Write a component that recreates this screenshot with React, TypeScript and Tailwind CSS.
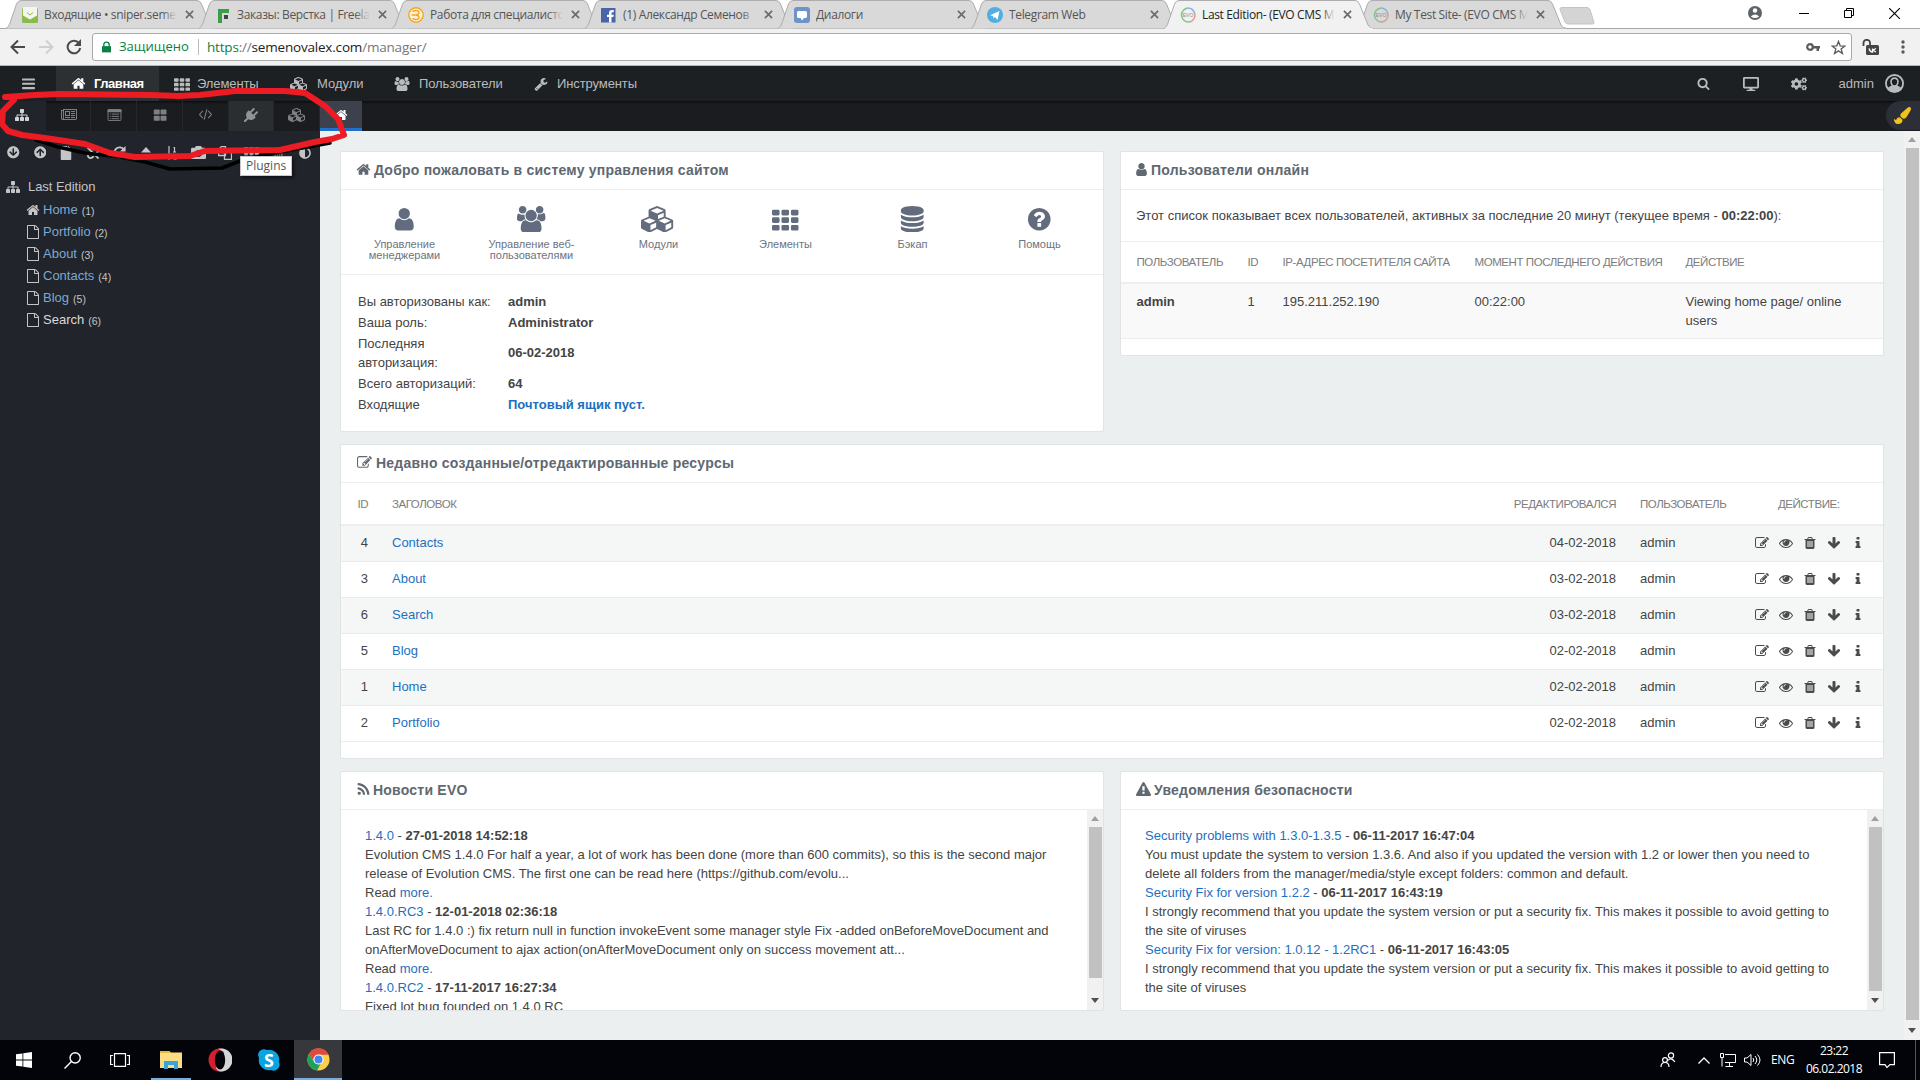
import type { ReactNode } from "react";
import { FaAdjust, FaArrowCircleDown, FaArrowCircleUp, FaCamera, FaCogs, FaDesktop, FaFile, FaPaintBrush, FaUnlink } from "react-icons/fa";

type IconProps = { className?: string };

// Font Awesome 4 outlines: [viewBox width, path]
const GLYPHS = {
    home: [1792, "M1472 992v480q0 26-19 45t-45 19h-384v-384h-256v384h-384q-26 0-45-19t-19-45v-480q0-1 .5-3t.5-3l575-474 575 474q1 2 1 6zm223-69l-62 74q-8 9-21 11h-3q-13 0-21-7l-692-577-692 577q-12 8-24 7-13-2-21-11l-62-74q-8-10-7-23.5t11-21.5l719-599q32-26 76-26t76 26l244 204v-195q0-14 9-23t23-9h192q14 0 23 9t9 23v408l219 182q10 8 11 21.5t-7 23.5z"],
    edit: [1792, "M888 1184l116-116-152-152-116 116v56h96v96h56zm440-720q-16-16-33 1l-350 350q-17 17-1 33t33-1l350-350q17-17 1-33zm80 594v190q0 119-84.5 203.5t-203.5 84.5h-832q-119 0-203.5-84.5t-84.5-203.5v-832q0-119 84.5-203.5t203.5-84.5h832q63 0 117 25 15 7 18 23 3 17-9 29l-49 49q-14 14-32 8-23-6-45-6h-832q-66 0-113 47t-47 113v832q0 66 47 113t113 47h832q66 0 113-47t47-113v-126q0-13 9-22l64-64q15-15 35-7t20 29zm-96-738l288 288-672 672h-288v-288zm444 132l-92 92-288-288 92-92q28-28 68-28t68 28l152 152q28 28 28 68t-28 68z"],
    eye: [1792, "M1664 960q-152-236-381-353 61 104 61 225 0 185-131.5 316.5t-316.5 131.5-316.5-131.5-131.5-316.5q0-121 61-225-229 117-381 353 133 205 333.5 326.5t434.5 121.5 434.5-121.5 333.5-326.5zm-720-384q0-20-14-34t-34-14q-125 0-214.5 89.5t-89.5 214.5q0 20 14 34t34 14 34-14 14-34q0-86 61-147t147-61q20 0 34-14t14-34zm848 384q0 34-20 69-140 230-376.5 368.5t-499.5 138.5-499.5-139-376.5-368q-20-35-20-69t20-69q140-229 376.5-368t499.5-139 499.5 139 376.5 368q20 35 20 69z"],
    trash: [1792, "M704 1376v-704q0-14-9-23t-23-9h-64q-14 0-23 9t-9 23v704q0 14 9 23t23 9h64q14 0 23-9t9-23zm256 0v-704q0-14-9-23t-23-9h-64q-14 0-23 9t-9 23v704q0 14 9 23t23 9h64q14 0 23-9t9-23zm256 0v-704q0-14-9-23t-23-9h-64q-14 0-23 9t-9 23v704q0 14 9 23t23 9h64q14 0 23-9t9-23zm-544-992h448l-48-117q-7-9-17-11h-317q-10 2-17 11zm928 32v64q0 14-9 23t-23 9h-96v948q0 83-47 143.5t-113 60.5h-832q-66 0-113-58.5t-47-141.5v-952h-96q-14 0-23-9t-9-23v-64q0-14 9-23t23-9h309l70-167q15-37 54-63t79-26h320q40 0 79 26t54 63l70 167h309q14 0 23 9t9 23z"],
    down: [1792, "M1675 832q0 53-37 90l-651 652q-39 37-91 37-53 0-90-37l-651-652q-38-36-38-90 0-53 38-91l74-75q39-37 91-37 53 0 90 37l294 294v-704q0-52 38-90t90-38h128q52 0 90 38t38 90v704l294-294q37-37 90-37 52 0 91 37l75 75q37 39 37 91z"],
    info: [1792, "M1216 1344v128q0 26-19 45t-45 19h-512q-26 0-45-19t-19-45v-128q0-26 19-45t45-19h64v-384h-64q-26 0-45-19t-19-45v-128q0-26 19-45t45-19h384q26 0 45 19t19 45v576h64q26 0 45 19t19 45zm-128-1152v192q0 26-19 45t-45 19h-256q-26 0-45-19t-19-45v-192q0-26 19-45t45-19h256q26 0 45 19t19 45z"],
    sitemap: [1792, "M1792 1248v320q0 40-28 68t-68 28h-320q-40 0-68-28t-28-68v-320q0-40 28-68t68-28h96v-192h-512v192h96q40 0 68 28t28 68v320q0 40-28 68t-68 28h-320q-40 0-68-28t-28-68v-320q0-40 28-68t68-28h96v-192h-512v192h96q40 0 68 28t28 68v320q0 40-28 68t-68 28h-320q-40 0-68-28t-28-68v-320q0-40 28-68t68-28h96v-192q0-52 38-90t90-38h512v-192h-96q-40 0-68-28t-28-68v-320q0-40 28-68t68-28h320q40 0 68 28t28 68v320q0 40-28 68t-68 28h-96v192h512q52 0 90 38t38 90v192h96q40 0 68 28t28 68z"],
    cubes: [2304, "M640 1632l384-192v-314l-384 164v342zm-64-454l404-173-404-173-404 173zm1088 454l384-192v-314l-384 164v342zm-64-454l404-173-404-173-404 173zm-448-293l384-165v-266l-384 164v267zm-64-379l441-189-441-189-441 189zm1088 518v416q0 36-19 67t-52 47l-448 224q-25 14-57 14t-57-14l-448-224q-5-2-7-4-2 2-7 4l-448 224q-25 14-57 14t-57-14l-448-224q-33-16-52-47t-19-67v-416q0-38 21.5-70t56.5-48l434-186v-400q0-38 21.5-70t56.5-48l448-192q23-10 50-10t50 10l448 192q35 16 56.5 48t21.5 70v400l434 186q36 16 57 48t21 70z"],
    users: [2048, "M657 896q-162 5-265 128h-134q-82 0-138-40.5t-56-118.5q0-353 124-353 6 0 43.5 21t97.5 42.5 119 21.5q67 0 133-23-5 37-5 66 0 159 90 294zm1071 637q0 120-73 189.5t-194 69.5h-874q-121 0-194-69.5t-73-189.5q0-53 3.5-103.5t14-109 26.5-108.5 43-97.5 62-81 85.5-53.5 111.5-20q10 0 43 21.5t73 48 107 48 135 21.5 135-21.5 107-48 73-48 43-21.5q61 0 111.5 20t85.5 53.5 62 81 43 97.5 26.5 108.5 14 109 3.5 103.5zm-1024-1277q0 106-75 181t-181 75-181-75-75-181 75-181 181-75 181 75 75 181zm704 384q0 159-112.5 271.5t-271.5 112.5-271.5-112.5-112.5-271.5 112.5-271.5 271.5-112.5 271.5 112.5 112.5 271.5zm576 225q0 78-56 118.5t-138 40.5h-134q-103-123-265-128 90-135 90-294 0-29-5-66 66 23 133 23 59 0 119-21.5t97.5-42.5 43.5-21q124 0 124 353zm-128-609q0 106-75 181t-181 75-181-75-75-181 75-181 181-75 181 75 75 181z"],
    user: [1792, "M1536 1399q0 109-62.5 187t-150.5 78h-854q-88 0-150.5-78t-62.5-187q0-85 8.5-160.5t31.5-152 58.5-131 94-89 134.5-34.5q131 128 313 128t313-128q76 0 134.5 34.5t94 89 58.5 131 31.5 152 8.5 160.5zm-256-887q0 159-112.5 271.5t-271.5 112.5-271.5-112.5-112.5-271.5 112.5-271.5 271.5-112.5 271.5 112.5 112.5 271.5z"],
    wrench: [1792, "M448 1472q0-26-19-45t-45-19-45 19-19 45 19 45 45 19 45-19 19-45zm644-420l-682 682q-37 37-90 37-52 0-91-37l-106-108q-38-36-38-90 0-53 38-91l681-681q39 98 114.5 173.5t173.5 114.5zm634-435q0 39-23 106-47 134-164.5 217.5t-258.5 83.5q-185 0-316.5-131.5t-131.5-316.5 131.5-316.5 316.5-131.5q58 0 121.5 16.5t107.5 46.5q16 11 16 28t-16 28l-293 169v224l193 107q5-3 79-48.5t135.5-81 70.5-35.5q15 0 23.5 10t8.5 25z"],
    database: [1792, "M896 768q237 0 443-43t325-127v170q0 69-103 128t-280 93.5-385 34.5-385-34.5-280-93.5-103-128v-170q119 84 325 127t443 43zm0 768q237 0 443-43t325-127v170q0 69-103 128t-280 93.5-385 34.5-385-34.5-280-93.5-103-128v-170q119 84 325 127t443 43zm0-384q237 0 443-43t325-127v170q0 69-103 128t-280 93.5-385 34.5-385-34.5-280-93.5-103-128v-170q119 84 325 127t443 43zm0-1152q208 0 385 34.5t280 93.5 103 128v128q0 69-103 128t-280 93.5-385 34.5-385-34.5-280-93.5-103-128v-128q0-69 103-128t280-93.5 385-34.5z"],
    question: [1792, "M1024 1376v-192q0-14-9-23t-23-9h-192q-14 0-23 9t-9 23v192q0 14 9 23t23 9h192q14 0 23-9t9-23zm256-672q0-88-55.5-163t-138.5-116-170-41q-243 0-371 213-15 24 8 42l132 100q7 6 19 6 16 0 25-12 53-68 86-92 34-24 86-24 48 0 85.5 26t37.5 59q0 38-20 61t-68 45q-63 28-115.5 86.5t-52.5 125.5v36q0 14 9 23t23 9h192q14 0 23-9t9-23q0-19 21.5-49.5t54.5-49.5q32-18 49-28.5t46-35 44.5-48 28-60.5 12.5-81zm384 192q0 209-103 385.5t-279.5 279.5-385.5 103-385.5-103-279.5-279.5-103-385.5 103-385.5 279.5-279.5 385.5-103 385.5 103 279.5 279.5 103 385.5z"],
    file: [1792, "M1596 380q28 28 48 76t20 88v1152q0 40-28 68t-68 28h-1344q-40 0-68-28t-28-68v-1600q0-40 28-68t68-28h896q40 0 88 20t76 48zm-444-244v376h376q-10-29-22-41l-313-313q-12-12-41-22zm384 1528v-1024h-416q-40 0-68-28t-28-68v-416h-768v1536h1280z"],
    warning: [1792, "M1024 1375v-190q0-14-9.5-23.5t-22.5-9.5h-192q-13 0-22.5 9.5t-9.5 23.5v190q0 14 9.5 23.5t22.5 9.5h192q13 0 22.5-9.5t9.5-23.5zm-2-374l18-459q0-12-10-19-13-11-24-11h-220q-11 0-24 11-10 7-10 21l17 457q0 10 10 16.5t24 6.5h185q14 0 23.5-6.5t10.5-16.5zm-14-934l768 1408q35 63-2 126-17 29-46.5 46t-63.5 17h-1536q-34 0-63.5-17t-46.5-46q-37-63-2-126l768-1408q17-31 47-49t65-18 65 18 47 49z"],
    search: [1792, "M1216 832q0-185-131.5-316.5t-316.5-131.5-316.5 131.5-131.5 316.5 131.5 316.5 316.5 131.5 316.5-131.5 131.5-316.5zm512 832q0 52-38 90t-90 38q-54 0-90-38l-343-342q-179 124-399 124-143 0-273.5-55.5t-225-150-150-225-55.5-273.5 55.5-273.5 150-225 225-150 273.5-55.5 273.5 55.5 225 150 150 225 55.5 273.5q0 220-124 399l343 343q37 37 37 90z"],
    rss: [1792, "M576 1344q0 80-56 136t-136 56-136-56-56-136 56-136 136-56 136 56 56 136zm512 123q2 28-17 48-18 21-47 21h-135q-25 0-43-16.5t-20-41.5q-22-229-184.5-391.5t-391.5-184.5q-25-2-41.5-20t-16.5-43v-135q0-29 21-47 17-17 43-17h5q160 13 306 80.5t259 181.5q114 113 181.5 259t80.5 306zm512 2q2 27-18 47-18 20-46 20h-143q-26 0-44.5-17.5t-19.5-42.5q-12-215-101-408.5t-231.5-336-336-231.5-408.5-102q-25-1-42.5-19.5t-17.5-43.5v-143q0-28 20-46 18-18 44-18h3q262 13 501.5 120t425.5 294q187 186 294 425.5t120 501.5z"],
    plug: [1792, "M1755 453q37 38 37 90.5t-37 90.5l-401 400 150 150-160 160q-163 163-389.5 186.5t-411.5-100.5l-362 362h-181v-181l362-362q-124-185-100.5-411.5t186.5-389.5l160-160 150 150 400-401q38-37 91-37t90 37 37 90.5-37 90.5l-400 401 234 234 401-400q38-37 91-37t90 37z"],
    newspaper: [2048, "M1024 512h-384v384h384v-384zm128 640v128h-640v-128h640zm0-768v640h-640v-640h640zm640 768v128h-512v-128h512zm0-256v128h-512v-128h512zm0-256v128h-512v-128h512zm0-256v128h-512v-128h512zm-1536 960v-960h-128v960q0 26 19 45t45 19 45-19 19-45zm1664 0v-1088h-1536v1088q0 33-11 64h1483q26 0 45-19t19-45zm128-1216v1216q0 80-56 136t-136 56h-1664q-80 0-136-56t-56-136v-1088h256v-128h1792z"],
    th: [1792, "M96 256h320q96 0 96 96v192q0 96-96 96h-320q-96 0-96-96v-192q0-96 96-96zm0 512h320q96 0 96 96v192q0 96-96 96h-320q-96 0-96-96v-192q0-96 96-96zm0 512h320q96 0 96 96v192q0 96-96 96h-320q-96 0-96-96v-192q0-96 96-96zM736 256h320q96 0 96 96v192q0 96-96 96h-320q-96 0-96-96v-192q0-96 96-96zm0 512h320q96 0 96 96v192q0 96-96 96h-320q-96 0-96-96v-192q0-96 96-96zm0 512h320q96 0 96 96v192q0 96-96 96h-320q-96 0-96-96v-192q0-96 96-96zM1376 256h320q96 0 96 96v192q0 96-96 96h-320q-96 0-96-96v-192q0-96 96-96zm0 512h320q96 0 96 96v192q0 96-96 96h-320q-96 0-96-96v-192q0-96 96-96zm0 512h320q96 0 96 96v192q0 96-96 96h-320q-96 0-96-96v-192q0-96 96-96z"],
    thLarge: [1792, "M192 192h576q96 0 96 96v448q0 96-96 96h-576q-96 0-96-96v-448q0-96 96-96zm0 800h576q96 0 96 96v448q0 96-96 96h-576q-96 0-96-96v-448q0-96 96-96zM1056 192h576q96 0 96 96v448q0 96-96 96h-576q-96 0-96-96v-448q0-96 96-96zm0 800h576q96 0 96 96v448q0 96-96 96h-576q-96 0-96-96v-448q0-96 96-96z"],
    bars: [1792, "M192 288h1408q64 0 64 64v128q0 64-64 64h-1408q-64 0-64-64v-128q0-64 64-64zm0 512h1408q64 0 64 64v128q0 64-64 64h-1408q-64 0-64-64v-128q0-64 64-64zm0 512h1408q64 0 64 64v128q0 64-64 64h-1408q-64 0-64-64v-128q0-64 64-64z"],
} as const;

type GlyphName = keyof typeof GLYPHS;

function Fa({ name, className }: { name: GlyphName } & IconProps) {
    const [width, d] = GLYPHS[name];
    return (
        <svg viewBox={`0 0 ${width} 1792`} fill="currentColor" className={`shrink-0 ${className ?? ""}`}>
            <path d={d} />
        </svg>
    );
}

const EvoIcon = () => (
    <svg viewBox="0 0 16 16" className="size-4 shrink-0" fill="none" strokeWidth="1.5">
        <path d="M8 1a7 7 0 0 1 6.5 5" stroke="#7fb2e0" />
        <path d="M14.6 6A7 7 0 0 1 9 15" stroke="#e39a86" />
        <path d="M9 15A7 7 0 0 1 8 1" stroke="#86c08c" />
        <text x="8" y="10" fontSize="5" textAnchor="middle" fill="#888" fontFamily="Liberation Sans">EVO</text>
    </svg>
);

const TABS: { title: string; icon: ReactNode; active?: boolean }[] = [
    {
        title: "Входящие • sniper.semer",
        icon: (
            <svg viewBox="0 0 16 16" className="size-4 shrink-0">
                <rect y="1" width="16" height="15" rx="1.5" fill="#8bbb4a" />
                <path d="M1 0h14v8.500l-7 4-7-4z" fill="#f3f6ec" />
                <path d="M5 5.500l3 2.500 3-2.500" stroke="#8bbb4a" fill="none" />
            </svg>
        ),
    },
    {
        title: "Заказы: Верстка | Freelan",
        icon: (
            <svg viewBox="0 0 16 16" className="size-4 shrink-0">
                <path d="M3 2h11v4H7v10H3z" fill="#3d9c46" />
                <path d="M9 8h4v4H9z" fill="#444" />
            </svg>
        ),
    },
    {
        title: "Работа для специалистов",
        icon: (
            <svg viewBox="0 0 16 16" className="size-4 shrink-0" fill="none" stroke="#f5a623" strokeWidth="1.4">
                <circle cx="8" cy="8" r="7.200" fill="#fff3da" />
                <path d="M5 5q0-1.500 3-1.500T11 5.500 8 8M5 11q0 1.500 3 1.500t3-2T8 8M3.500 8H8" />
            </svg>
        ),
    },
    {
        title: "(1) Александр Семенов",
        icon: (
            <svg viewBox="0 0 16 16" className="size-4 shrink-0">
                <rect y="1" width="14.500" height="14.500" fill="#4a64a8" />
                <path d="M8 15.500V10H6V7.700h2V6q0-3 3-3h1.800v2.200h-1.300q-1 0-1 1v1.500h2.300L12.400 10h-1.900v5.500z" fill="#fff" />
            </svg>
        ),
    },
    {
        title: "Диалоги",
        icon: (
            <svg viewBox="0 0 16 16" className="size-4 shrink-0">
                <rect width="16" height="16" rx="3" fill="#6d93c7" />
                <path d="M4.500 4h7q1.500 0 1.500 1.500v4q0 1.500-1.500 1.500H10l-2 2.500L6.500 11h-2Q3 11 3 9.500v-4Q3 4 4.500 4z" fill="#fff" />
            </svg>
        ),
    },
    {
        title: "Telegram Web",
        icon: (
            <svg viewBox="0 0 16 16" className="size-4 shrink-0">
                <circle cx="8" cy="8" r="8" fill="#4fafe3" />
                <path d="M3 8.200L12.500 4l-2 9-2.500-3-1.500 1.500L6.200 9z" fill="#fff" />
            </svg>
        ),
    },
    { title: "Last Edition- (EVO CMS M", icon: <EvoIcon />, active: true },
    { title: "My Test Site- (EVO CMS M", icon: <EvoIcon /> },
];

function BrowserTab({ title, icon, active }: (typeof TABS)[number]) {
    return (
        <div className={`relative h-[29px] w-[193px] shrink-0 ${active ? "z-10" : ""}`}>
            <svg viewBox="0 0 211 29" className="absolute top-0 left-0 h-[29px] w-[211px]">
                <path d="M0 28.500Q2.500 27.500 4 23L10.500 4Q12 .5 15 .5H191Q194 .5 195.500 4L204 25Q205.500 28 210 28.500" fill={active ? "#f1f1f1" : "#d9d9d9"} stroke="#adadad" />
                {active && <path d="M1 28.500h208" stroke="#f1f1f1" strokeWidth="1.500" />}
            </svg>
            <div className="relative flex h-full items-center pl-4">
                {icon}
                <span className={`ml-[6px] w-[133px] overflow-hidden whitespace-nowrap text-[12px] tracking-[-0.35px] ${active ? "text-[#222]" : "text-[#555]"}`}>{title}</span>
                <svg viewBox="0 0 10 10" className="ml-[8px] size-[9px] shrink-0">
                    <path d="M1 1l8 8M9 1L1 9" stroke="#6a6a6a" strokeWidth="1.800" />
                </svg>
            </div>
            <div className={`absolute top-1 left-[156px] h-[22px] w-[15px] bg-linear-to-r from-transparent ${active ? "to-[#f1f1f1]" : "to-[#d9d9d9]"}`} />
        </div>
    );
}

function Browser() {
    return (
        <div className="h-[66px] bg-[#f1f1f1] font-['Open_Sans',sans-serif]">
            <div className="flex h-[29px] border-b border-[#a8a8a8] bg-white pl-[6px]">
                {TABS.map((tab) => (
                    <BrowserTab key={tab.title} {...tab} />
                ))}
                <svg viewBox="0 0 36 18" className="mt-[7px] ml-[9px] h-[18px] w-9">
                    <path d="M3 .5h25q2 0 3 2l4 13q.5 1.500-1.500 1.500H9q-2 0-3-2L1 2.500Q.5.500 3 .5z" fill="#d4d4d4" stroke="#c4c4c4" />
                </svg>
                <div className="mr-[20px] ml-auto flex h-[26px] items-center gap-[35px]">
                    <svg viewBox="0 0 14 14" className="mr-[2px] size-[14px]">
                        <circle cx="7" cy="7" r="7" fill="#5f6368" />
                        <circle cx="7" cy="4.500" r="2.200" fill="#fff" />
                        <path d="M2.800 10.500q4.200-4 8.400 0-4.200 3-8.400 0z" fill="#fff" />
                    </svg>
                    <svg viewBox="0 0 10 10" className="size-[10px] stroke-black"><path d="M0 5.500h10" /></svg>
                    <svg viewBox="0 0 10 10" className="size-[10px] fill-none stroke-black"><path d="M.5 2.500h7v7h-7zM2.500 2.500v-2h7v7h-2" /></svg>
                    <svg viewBox="0 0 10 10" className="size-[11px] stroke-black"><path d="M0 0l10 10M10 0L0 10" /></svg>
                </div>
            </div>
            <div className="flex h-[37px] items-center border-b border-[#b6b6b8] pl-[10px]">
                <svg viewBox="0 0 16 16" className="size-4 fill-none stroke-[#4a4a4a] stroke-2"><path d="M15 8H2M8 1.500L1.500 8 8 14.500" /></svg>
                <svg viewBox="0 0 16 16" className="ml-[12px] size-4 fill-none stroke-[#cfcfcf] stroke-2"><path d="M1 8h13M8 1.500L14.500 8 8 14.500" /></svg>
                <svg viewBox="0 0 16 16" className="ml-[12px] size-4"><path d="M13 4.200A6.300 6.300 0 1 0 14.200 9" fill="none" stroke="#4a4a4a" strokeWidth="2" /><path d="M15 0v7H8z" fill="#4a4a4a" /></svg>
                <div className="ml-[10px] flex h-[28px] w-[1760px] items-center rounded-[3px] border border-[#a9a9a9] bg-white pl-[9px] text-[14px]">
                    <svg viewBox="0 0 10 12" className="h-[12px] w-[9px]"><path d="M0 5h10v7H0z" fill="#0b8043" /><path d="M2 5V3.500a3 3 0 0 1 6 0V5" fill="none" stroke="#0b8043" strokeWidth="1.500" /></svg>
                    <span className="ml-[8px] w-[70px] whitespace-nowrap text-[13px] text-[#0b8043]">Защищено</span>
                    <span className="ml-[9px] h-[16px] w-px bg-[#bbb]" />
                    <span className="ml-[8px] text-[13.500px] tracking-[-0.19px] text-[#777]">
                        <span className="text-[#0b8043]">https</span>://<span className="text-[#222]">semenovalex.com</span>/manager/
                    </span>
                    <svg viewBox="0 0 14 8" className="mr-[11px] ml-auto h-[8px] w-[14px]"><circle cx="4" cy="4" r="2.800" fill="none" stroke="#5a5a5a" strokeWidth="2.200" /><path d="M7 3h7v2.500h-1V8h-2.500V5.500H7z" fill="#5a5a5a" /></svg>
                    <svg viewBox="0 0 16 16" className="mr-[5px] size-[15px]"><path d="M8 1.500l1.800 4.700 5 .2-4 3.100 1.400 4.900L8 11.600l-4.200 2.800 1.400-4.900-4-3.100 5-.2z" fill="none" stroke="#5a5a5a" strokeWidth="1.400" /></svg>
                </div>
                <svg viewBox="0 0 17 16" className="ml-[10px] h-4 w-[17px]">
                    <path d="M1.500 7V4a3 3 0 0 1 6.500 0v2" fill="none" stroke="#444" strokeWidth="1.800" />
                    <rect x="4" y="6" width="13" height="10" rx="1.500" fill="#444" />
                    <path d="M7 9.500q1 3.500 3.500 3.500V9.500M14 9.500L10.800 11.200 14 13" fill="none" stroke="#fff" strokeWidth="1.300" />
                </svg>
                <svg viewBox="0 0 4 14" className="ml-[22px] h-[14px] w-1 fill-[#5a5a5a]"><circle cx="2" cy="2" r="1.700" /><circle cx="2" cy="7" r="1.700" /><circle cx="2" cy="12" r="1.700" /></svg>
            </div>
        </div>
    );
}

function MainMenu() {
    return (
        <header className="flex h-[35px] items-center bg-[#1d2023] text-[13px] text-[#b9bbbd]">
            <div className="flex w-14 justify-center"><Fa name="bars" className="h-[15px]" /></div>
            <div className="flex h-full w-[103px] items-center bg-[#2d3033] pl-[15px] font-bold tracking-[-0.45px] text-white">
                <Fa name="home" className="mr-[8px] h-[15px]" />Главная
            </div>
            <div className="flex w-[117px] items-center pl-[15px] tracking-[-0.1px]"><Fa name="th" className="mr-[7px] h-[16px]" />Элементы</div>
            <div className="flex w-[104px] items-center pl-[14px]"><Fa name="cubes" className="mr-[9px] h-[14px]" />Модули</div>
            <div className="flex w-[139px] items-center pl-[14px] tracking-[-0.1px]"><Fa name="users" className="mr-[9px] h-[14px]" />Пользователи</div>
            <div className="flex items-center pl-[15px] tracking-[-0.1px]"><Fa name="wrench" className="mr-[9px] h-[14px]" />Инструменты</div>
            <div className="mr-[16px] ml-auto flex items-center">
                <Fa name="search" className="h-[13px]" />
                <FaDesktop className="ml-[33px] size-[16px]" />
                <FaCogs className="ml-[32px] size-[16px]" />
                <span className="ml-[32px]">admin</span>
                <svg viewBox="0 0 20 20" className="ml-[11px] size-[19px]">
                    <path d="M10 0a10 10 0 1 1 0 20 10 10 0 0 1 0-20zm0 2a8 8 0 0 0-6.700 12.300q1.300-1.400 3.700-1.900Q5.500 10.500 5.500 8a4.500 4.500 0 0 1 9 0q0 2.500-1.500 4.400 2.400.5 3.700 1.900A8 8 0 0 0 10 2zm0 3.200A2.800 2.800 0 0 0 7.200 8Q7.200 11.800 10 11.800T12.800 8A2.800 2.800 0 0 0 10 5.200z" fill="currentColor" fillRule="evenodd" />
                </svg>
            </div>
        </header>
    );
}

const ListIcon = () => (
    <svg viewBox="0 0 15 13" className="h-[12px] w-[15px]" fill="none" stroke="currentColor">
        <rect x=".5" y=".5" width="14" height="12" rx="1" />
        <path d="M0 2h15" strokeWidth="3" />
        <path d="M2.500 5.500h1m1 0h8m-10 2.500h1m1 0h8m-10 2.500h1m1 0h8" />
    </svg>
);

const CodeIcon = () => (
    <svg viewBox="0 0 15 12" className="h-[11px] w-[15px]" fill="none" stroke="currentColor" strokeWidth="1.200">
        <path d="M4.500 2L1 6l3.500 4M10.500 2L14 6l-3.500 4M9 .5L6 11.500" />
    </svg>
);

function TabStrip() {
    const icons = [
        <Fa key="0" name="sitemap" className="mr-px h-[14px] text-[#d4d5d6]" />,
        <Fa key="1" name="newspaper" className="h-[14px]" />,
        <ListIcon key="2" />,
        <Fa key="3" name="thLarge" className="h-[14px]" />,
        <CodeIcon key="4" />,
        <Fa key="5" name="plug" className="h-[14px] text-[#919395]" />,
        <Fa key="6" name="cubes" className="h-[14px]" />,
    ];
    const bg = ["bg-[#21252b]", "", "", "", "", "bg-[#2b2e31]", ""];
    return (
        <div className="relative flex h-[30px] bg-[#1a1c20] shadow-[inset_0_3px_3px_-2px_#000000aa]">
            <div className="grid w-[320px] grid-cols-7 text-[#7d7f82]">
                {icons.map((icon, i) => (
                    <div key={i} className={`flex items-center justify-center border-r border-[#24272c] pb-[3px] pl-px ${bg[i]}`}>{icon}</div>
                ))}
            </div>
            <div className="flex h-full w-[42px] items-center justify-center border-b-[3px] border-[#1f70c9] bg-[#3d414b] text-white"><Fa name="home" className="h-[14px]" /></div>
            <div className="absolute right-0 flex h-[29px] w-[34px] items-center rounded-l-full bg-[#2c2f38] pl-[8px] text-[#f0c419]"><FaPaintBrush className="size-[17px]" /></div>
        </div>
    );
}

const PAGES = [
    { id: 1, title: "Home" },
    { id: 2, title: "Portfolio" },
    { id: 3, title: "About" },
    { id: 4, title: "Contacts" },
    { id: 5, title: "Blog" },
    { id: 6, title: "Search" },
];

function Sidebar() {
    return (
        <aside className="w-[320px] shrink-0 bg-[#21242b] pt-[14px] text-[#c3c5c7]">
            <div className="grid h-[15px] w-[318px] grid-cols-12 items-center justify-items-center">
                <FaArrowCircleDown className="size-[12.500px]" />
                <FaArrowCircleUp className="size-[12.500px]" />
                <FaFile className="size-[14px]" />
                <FaUnlink className="size-[12px]" />
                <svg viewBox="0 0 14 14" className="size-[13px]"><path d="M12 9.500a5.500 5.500 0 1 1-.3-5.500" fill="none" stroke="currentColor" strokeWidth="2" /><path d="M13.500 0v6h-6z" fill="currentColor" /></svg>
                <svg viewBox="0 0 12 12" className="size-[12px] fill-current"><path d="M6 0l5 5.500H1z" /></svg>
                <svg viewBox="0 0 12 14" className="h-[14px] w-[12px] fill-none stroke-current"><path d="M3 0v12M.5 10L3 13l2.500-3M7.500 1.500h1V6m-1.500 0h3M7.500 9H10v4H7.500" strokeWidth="1.200" /></svg>
                <FaCamera className="size-[15px]" />
                <svg viewBox="0 0 14 14" className="size-[14px] fill-none stroke-current"><path d="M.5 3.500L3.500.5h4v9h-7zM6.500 6.500l3-3h4v10h-7z" strokeWidth="1.300" /></svg>
                <Fa name="th" className="h-[15px]" />
                <Fa name="trash" className="h-[13px] text-[#666a70]" />
                <FaAdjust className="size-[12px]" />
            </div>
            <div className="mt-[17px] flex h-[20px] items-center pl-[6px] text-[13px] tracking-[-0.05px]"><Fa name="sitemap" className="mr-[8px] h-[14px]" />Last Edition</div>
            <ul className="mt-[2px] pl-[26px] text-[13px]">
                {PAGES.map(({ id, title }) => (
                    <li key={id} className="flex h-[22px] items-center">
                        <Fa name={id === 1 ? "home" : "file"} className="mr-[3px] h-[14px]" />
                        <span className={id === 6 ? "text-[#d9dadb]" : "text-[#7ba9d2]"}>{title}</span>
                        <span className="mt-[3px] ml-1 text-[10.500px]">({id})</span>
                    </li>
                ))}
            </ul>
        </aside>
    );
}

function Card({ icon, title, className, iconClass = "mr-[3px]", children }: { icon: GlyphName; title: string; className: string; iconClass?: string; children: ReactNode }) {
    return (
        <section className={`flex flex-col overflow-hidden rounded-[2px] border border-[#e0e4e5] bg-white ${className}`}>
            <h2 className="flex h-[38px] shrink-0 items-center border-b border-[#eceeef] pb-[2px] pl-[15px] text-[14px] leading-none font-bold tracking-[0.22px] text-[#606871]">
                <Fa name={icon} className={`h-[15px] ${iconClass}`} />{title}
            </h2>
            {children}
        </section>
    );
}

const SHORTCUTS: { icon: GlyphName; label: string[] }[] = [
    { icon: "user", label: ["Управление", "менеджерами"] },
    { icon: "users", label: ["Управление веб-", "пользователями"] },
    { icon: "cubes", label: ["Модули"] },
    { icon: "th", label: ["Элементы"] },
    { icon: "database", label: ["Бэкап"] },
    { icon: "question", label: ["Помощь"] },
];

function Welcome() {
    return (
        <Card icon="home" title="Добро пожаловать в систему управления сайтом" className="h-[281px]">
            <div className="grid h-[85px] grid-cols-6 border-b border-[#eceeef] pt-[15px]">
                {SHORTCUTS.map(({ icon, label }) => (
                    <div key={icon} className="flex flex-col items-center text-center text-[11px] leading-[11px] text-[#6c7480]">
                        <Fa name={icon} className="mt-[0.500px] mb-[7px] h-[26.500px] text-[#636c7e]" />
                        {label.map((line) => <span key={line}>{line}</span>)}
                    </div>
                ))}
            </div>
            <dl className="grid grid-cols-[150px_1fr] gap-y-[2px] pt-[17px] pl-[17px] leading-[19px] [&_dd]:self-center [&_dd]:font-bold">
                <dt>Вы авторизованы как:</dt><dd>admin</dd>
                <dt>Ваша роль:</dt><dd>Administrator</dd>
                <dt>Последняя<br />авторизация:</dt><dd className="-mt-[2px]">06-02-2018</dd>
                <dt>Всего авторизаций:</dt><dd>64</dd>
                <dt>Входящие</dt><dd className="text-[#1d6fc0]">Почтовый ящик пуст.</dd>
            </dl>
        </Card>
    );
}

function OnlineUsers() {
    return (
        <Card icon="user" iconClass="-ml-[2px] mr-[2px]" title="Пользователи онлайн" className="h-[205px]">
            <p className="h-[51px] pt-[16px] pl-[15px]">
                Этот список показывает всех пользователей, активных за последние 20 минут (текущее время - <b>00:22:00</b>):
            </p>
            <div className="grid h-[43px] grid-cols-[111px_35px_192px_211px_1fr] items-center border-t border-b-2 border-[#eceeef] pt-px pl-[15.500px] text-[11.500px] tracking-[-0.43px] whitespace-nowrap text-[#7d7d7d]">
                <span>ПОЛЬЗОВАТЕЛЬ</span><span>ID</span><span>IP-АДРЕС ПОСЕТИТЕЛЯ САЙТА</span><span>МОМЕНТ ПОСЛЕДНЕГО ДЕЙСТВИЯ</span><span>ДЕЙСТВИЕ</span>
            </div>
            <div className="grid h-[55px] grid-cols-[111px_35px_192px_211px_170px] border-b border-[#eceeef] bg-[#f9f9f9] pt-[8px] pl-[15.500px] leading-[19px]">
                <b>admin</b><span>1</span><span>195.211.252.190</span><span>00:22:00</span><span>Viewing home page/ online users</span>
            </div>
        </Card>
    );
}

const RESOURCES = [
    { id: 4, title: "Contacts", date: "04-02-2018" },
    { id: 3, title: "About", date: "03-02-2018" },
    { id: 6, title: "Search", date: "03-02-2018" },
    { id: 5, title: "Blog", date: "02-02-2018" },
    { id: 1, title: "Home", date: "02-02-2018" },
    { id: 2, title: "Portfolio", date: "02-02-2018" },
];

const ACTIONS: GlyphName[] = ["edit", "eye", "trash", "down", "info"];

function Resources() {
    return (
        <Card icon="edit" iconClass="ml-px mr-[4px]" title="Недавно созданные/отредактированные ресурсы" className="mt-[12px] h-[315px]">
            <div className="grid h-[43px] grid-cols-[27px_24px_1fr_110px_24px_115px_128px] items-center border-b-2 border-[#eceeef] pt-[2px] text-[11.500px] tracking-[-0.45px] text-[#7d7d7d]">
                <span className="text-right">ID</span><span /><span>ЗАГОЛОВОК</span><span className="text-right">РЕДАКТИРОВАЛСЯ</span><span />
                <span>ПОЛЬЗОВАТЕЛЬ</span><span className="pl-[23px]">ДЕЙСТВИЕ:</span>
            </div>
            {RESOURCES.map(({ id, title, date }) => (
                <div key={id} className="grid h-9 grid-cols-[27px_24px_1fr_110px_24px_115px_128px] items-center border-b border-[#e9ebec] pb-px odd:bg-[#f5f7f7]">
                    <span className="text-right">{id}</span><span /><a className="text-[#1d6fc0]">{title}</a><span className="text-right">{date}</span><span />
                    <span>admin</span>
                    <span className="flex gap-[10px] text-[#4b4b4f]">{ACTIONS.map((name) => <Fa key={name} name={name} className="size-[14px]" />)}</span>
                </div>
            ))}
        </Card>
    );
}

function Scrollbar({ thumb, className }: { thumb: string; className: string }) {
    return (
        <div className={`flex shrink-0 flex-col items-center bg-[#f1f1f1] ${className}`}>
            <svg viewBox="0 0 8 5" className="my-[6px] h-[5px] w-2 fill-[#a0a0a0]"><path d="M4 0l4 5H0z" /></svg>
            <div className={`w-[13px] bg-[#c1c1c1] ${thumb}`} />
            <svg viewBox="0 0 8 5" className="mt-auto mb-[7px] h-[5px] w-2 fill-[#505050]"><path d="M0 0h8L4 5z" /></svg>
        </div>
    );
}

const NEWS = [
    { title: "1.4.0", date: "27-01-2018 14:52:18", text: "Evolution CMS 1.4.0 For half a year, a lot of work has been done (more than 600 commits), so this is the second major release of Evolution CMS. The first one can be read here (https://github.com/evolu...", more: true },
    { title: "1.4.0.RC3", date: "12-01-2018 02:36:18", text: "Last RC for 1.4.0 :) fix return null in function invokeEvent some manager style Fix -added onBeforeMoveDocument and onAfterMoveDocument to ajax action(onAfterMoveDocument only on success movement att...", more: true },
    { title: "1.4.0.RC2", date: "17-11-2017 16:27:34", text: "Fixed lot bug founded on 1.4.0 RC" },
];

const SECURITY = [
    { title: "Security problems with 1.3.0-1.3.5", date: "06-11-2017 16:47:04", text: "You must update the system to version 1.3.6. And also if you updated the version with 1.2 or lower then you need to delete all folders from the manager/media/style except folders: common and default." },
    { title: "Security Fix for version 1.2.2", date: "06-11-2017 16:43:19", text: "I strongly recommend that you update the system version or put a security fix. This makes it possible to avoid getting to the site of viruses" },
    { title: "Security Fix for version: 1.0.12 - 1.2RC1", date: "06-11-2017 16:43:05", text: "I strongly recommend that you update the system version or put a security fix. This makes it possible to avoid getting to the site of viruses" },
];

function Feed({ items, thumb }: { items: { title: string; date: string; text: string; more?: boolean }[]; thumb: string }) {
    return (
        <div className="flex min-h-0 flex-1">
            <div className="flex-1 overflow-hidden pt-[16px] pr-[23px] pl-[24px] leading-[19px]">
                {items.map(({ title, date, text, more }) => (
                    <div key={title}>
                        <div><a className="text-[#1d6fc0]">{title}</a> - <b>{date}</b></div>
                        <p>{text}</p>
                        {more && <div>Read <a className="text-[#1d6fc0]">more.</a></div>}
                    </div>
                ))}
            </div>
            <Scrollbar thumb={thumb} className="w-[16px]" />
        </div>
    );
}

function Taskbar() {
    return (
        <footer className="flex h-10 items-center bg-[#02040a] text-white">
            <div className="flex w-12 justify-center"><svg viewBox="0 0 16 16" className="size-4 fill-white"><path d="M0 2.300l6.500-.9v6.200H0zM7.300 1.300L16 0v7.600H7.300zM0 8.400h6.500v6.200L0 13.700zM7.300 8.400H16V16l-8.700-1.300z" /></svg></div>
            <div className="flex w-12 justify-center"><svg viewBox="0 0 16 16" className="size-[17px] fill-none stroke-white" strokeWidth="1.300"><circle cx="10.500" cy="5.500" r="4.800" /><path d="M7 9L.5 15.500" /></svg></div>
            <div className="flex w-12 justify-center"><svg viewBox="0 0 20 14" className="h-[14px] w-5 fill-none stroke-white" strokeWidth="1.200"><path d="M4.500.6h11v12.800h-11zM3 2.500H.6v9H3M17 2.500h2.400v9H17" /></svg></div>
            <div className="ml-[7px] flex h-full w-10 items-center justify-center border-b-2 border-[#76aee0]">
                <svg viewBox="0 0 22 18" className="mt-px h-[18px] w-[22px]"><path d="M0 0h9l2 1.500h11V17H0z" fill="#f9dd85" /><path d="M0 0h9l2 2H0z" fill="#e8b83e" /><path d="M4 10h14v8h-4v-4H8v4H4z" fill="#3aa3dc" /></svg>
            </div>
            <div className="ml-[5px] flex w-12 justify-center">
                <svg viewBox="0 0 24 24" className="size-[24px]"><circle cx="12" cy="12" r="11.500" fill="#d2202f" /><path d="M10 .8a11.500 11.500 0 1 1 3 22.600q-3 .2-5-3.400l8-16z" fill="#d5d5d5" /><ellipse cx="12" cy="12" rx="5.200" ry="9.500" fill="#02040a" /></svg>
            </div>
            <div className="flex w-[50px] justify-center">
                <svg viewBox="0 0 24 24" className="size-[24px]"><path d="M1 7a6 6 0 0 1 9-5 10 10 0 0 1 12 12 6 6 0 0 1-8 8A10 10 0 0 1 2 10z" fill="#0aa4e0" /><text x="12" y="18.500" fontSize="18" fontWeight="bold" textAnchor="middle" fill="#fff" fontFamily="Open Sans">S</text></svg>
            </div>
            <div className="flex h-full w-12 items-center justify-center border-b-2 border-[#76aee0] bg-[#36383c]">
                <svg viewBox="0 0 24 24" className="size-[23px]"><circle cx="12" cy="12" r="11.500" fill="#fdd04c" /><path d="M2 6.200A11.500 11.500 0 0 1 22.500 7H12a5 5 0 0 0-4.500 7.300z" fill="#dc4b3e" /><path d="M2 6.200l5.500 8.300q2 3.300 6.500 2.300l-3.500 6.600A11.500 11.500 0 0 1 2 6.200z" fill="#1fa05c" /><circle cx="12" cy="12" r="5.300" fill="#fff" /><circle cx="12" cy="12" r="4.200" fill="#4486f3" /></svg>
            </div>
            <div className="ml-auto flex h-full items-center font-['Open_Sans',sans-serif] text-[12px]">
                <svg viewBox="0 0 16 16" className="size-4 fill-none stroke-white" strokeWidth="1.200"><circle cx="11" cy="3.500" r="2.600" /><circle cx="5" cy="8" r="2.400" /><path d="M1 15q0-4.500 4-4.500T9 15M8 8.500Q11 4.500 15 10" /></svg>
                <svg viewBox="0 0 12 7" className="ml-[22px] h-[7px] w-3 fill-none stroke-white" strokeWidth="1.300"><path d="M.5 6.500L6 1l5.500 5.500" /></svg>
                <svg viewBox="0 0 16 14" className="ml-[10px] h-[14px] w-4 fill-none stroke-white"><path d="M5 1.500h10.500v8H5M9.500 9.500v4m-4 0H13M.5.500h3v4h-3zM2 4.500v9" /></svg>
                <svg viewBox="0 0 17 14" className="ml-[8px] h-[14px] w-[17px] fill-none stroke-white"><path d="M.5 5h2.500l4-3.500v11L3 9H.5zM9 5q1.500 2 0 4M11 3q3.500 4 0 8M13.500 1.500q5 5.500 0 11" /></svg>
                <span className="ml-[10px] w-[23px] tracking-[-0.3px]">ENG</span>
                <div className="ml-[11px] w-[58px] text-center leading-[18px] tracking-[-0.5px]">23:22<br />06.02.2018</div>
                <svg viewBox="0 0 16 16" className="mr-[20px] ml-[16px] size-4 fill-none stroke-white" strokeWidth="1.200"><path d="M.6.600h14.800v12H11L8 15.500l-2-2.900H.6z" /></svg>
                <span className="mr-1 h-full w-px bg-[#555]" />
            </div>
        </footer>
    );
}

export default function App() {
    return (
        <div className="relative flex h-[1080px] w-[1920px] flex-col overflow-hidden font-['Liberation_Sans',Arial,sans-serif] text-[13px] text-[#444]">
            <Browser />
            <MainMenu />
            <TabStrip />
            <div className="flex h-[909px]">
                <Sidebar />
                <main className="flex-1 bg-[#ebeff0] px-[20px] pt-[20px] pr-[20px]">
                    <div className="grid grid-cols-[764px_764px] items-start gap-[16px]">
                        <Welcome />
                        <OnlineUsers />
                    </div>
                    <Resources />
                    <div className="mt-[12px] grid grid-cols-[764px_764px] gap-[16px]">
                        <Card icon="rss" iconClass="mr-[2px]" title="Новости EVO" className="h-[240px]"><Feed items={NEWS} thumb="h-[151px]" /></Card>
                        <Card icon="warning" title="Уведомления безопасности" className="h-[240px]"><Feed items={SECURITY} thumb="h-[164px]" /></Card>
                    </div>
                </main>
                <Scrollbar thumb="h-[872px]" className="w-4" />
            </div>
            <Taskbar />

            {/* pen marks drawn over the toolbar */}
            <svg viewBox="0 0 360 180" className="absolute top-0 left-0 h-[180px] w-[360px] fill-none" strokeLinecap="round" strokeLinejoin="round">
                <path d="M36 140L58 147 85 153 120 157 145 162 170 169 222 168 245 159 280 152 330 143" stroke="#000" strokeWidth="3.500" />
                <path d="M5 97L35 95 60 94 150 95 178 96 200 95 235 91 285 91 305 93 325 106 338 119 344 135 332 139 315 142 280 150 205 151 190 156 135 157 110 153 85 144 45 138 22 135 8 131 2 124 3 111 14 100" stroke="#ed1c24" strokeWidth="6" />
            </svg>
            <div className="absolute top-[156px] left-[240px] h-5 w-[52px] border border-[#c8c8c8] bg-white pl-[5px] font-['Open_Sans',sans-serif] text-[12px] leading-[18px] text-[#575757] shadow-[2px_2px_3px_#0008]">Plugins</div>
        </div>
    );
}
